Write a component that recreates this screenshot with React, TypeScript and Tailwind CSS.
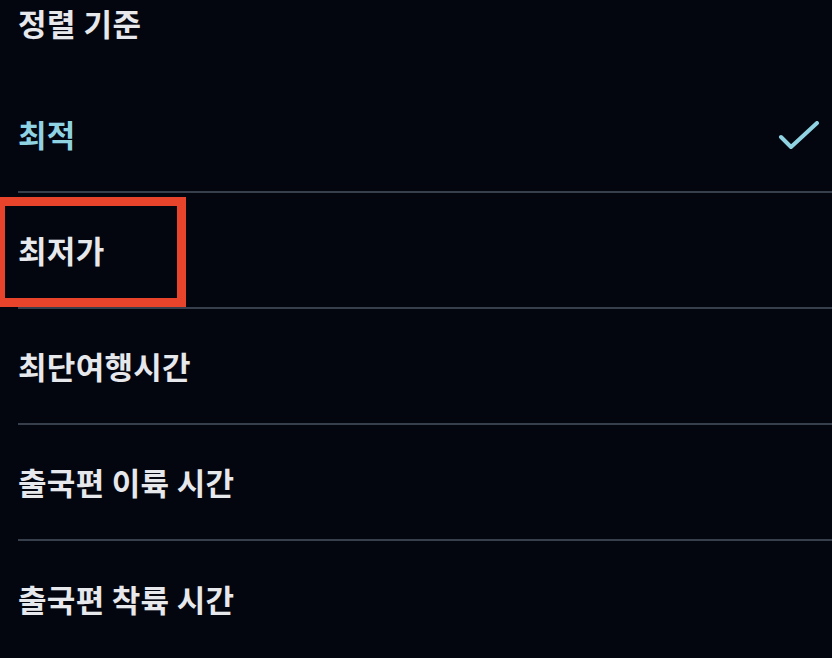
import React from 'react';

const options = ['최적', '최저가', '최단여행시간', '출국편 이륙 시간', '출국편 착륙 시간'];

function CheckIcon() {
  return (
    <svg width="44" height="32" viewBox="0 0 44 32" fill="none" aria-hidden="true" className="mt-[6px]">
      <polyline
        points="5,16 15,26 41,2"
        stroke="#8fd3e3"
        strokeWidth="4"
        strokeLinecap="round"
        strokeLinejoin="round"
      />
    </svg>
  );
}

export default function App() {
  const selected = 0;

  return (
    <div
      className="relative w-[832px] h-[658px] overflow-hidden bg-[#03060f] text-[#e6e8ec]"
      style={{ fontFamily: '"Noto Sans CJK KR", "Noto Sans", sans-serif' }}
    >
      <div className="h-[77px] pl-[18px]">
        <h2 className="text-[31px] font-bold leading-[45px] tracking-[0.5px]">정렬 기준</h2>
      </div>
      <ul className="ml-[18px]">
        {options.map((label, i) => (
          <li
            key={label}
            className="flex h-[116px] items-center justify-between border-b-2 border-[#383f4c] pr-[12px] last:border-b-0"
          >
            <span
              className={`text-[31px] font-bold tracking-[0.3px] ${i === selected ? 'text-[#8fd3e3]' : 'text-[#e6e8ec]'}`}
            >
              {label}
            </span>
            {i === selected && <CheckIcon />}
          </li>
        ))}
      </ul>
      {/* annotation box */}
      <div className="absolute left-[-4px] top-[197px] h-[110px] w-[190px] border-[9px] border-[#e8432b]" />
    </div>
  );
}
